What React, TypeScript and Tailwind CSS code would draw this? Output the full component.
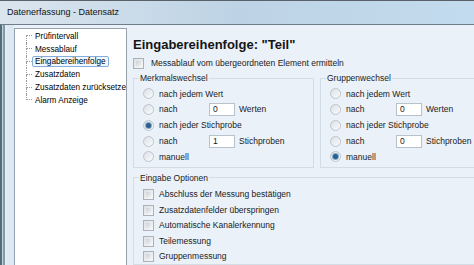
const FONT = "font-['Liberation_Sans',Arial,sans-serif]";

function Radio({ checked }: { checked?: boolean }) {
  return (
    <span className="w-[11px] h-[11px] rounded-full border border-[#bcc5cd] bg-gradient-to-br from-[#dce1e6] to-[#fbfcfd] flex items-center justify-center shrink-0">
      {checked && <span className="w-[5px] h-[5px] rounded-full bg-[#285f8e] ring-1 ring-[#86abc9]" />}
    </span>
  );
}

function Check() {
  return (
    <span className="w-[11px] h-[11px] border border-[#aab2ba] bg-gradient-to-br from-[#dde0e4] to-[#f7f8f9] shrink-0 p-[2px]">
      <span className="block w-full h-full bg-gradient-to-br from-[#cdd2d7] to-[#eff1f3]" />
    </span>
  );
}

function Field({ value }: { value: string }) {
  return (
    <span className="w-[26px] h-[13px] bg-white border border-[#b8c2cb] pl-[3px] leading-[11px] shrink-0">
      {value}
    </span>
  );
}

type Opt = { label: string; value?: string; unit?: string; checked?: boolean };

function RadioGroup({ title, options, width }: { title: string; options: Opt[]; width: string }) {
  return (
    <fieldset className={`${width} shrink-0 border border-[#d3dde5] pl-[9px] pt-[2px] pb-[2px]`}>
      <legend className="-ml-[4px] px-[1px] leading-[12px] text-[#222]">{title}</legend>
      {options.map((o, i) => (
        <div key={i} className="h-[15.75px] flex items-center">
          <Radio checked={o.checked} />
          <span className="ml-[5px] w-[50px] whitespace-nowrap">{o.label}</span>
          {o.value !== undefined && (
            <>
              <Field value={o.value} />
              <span className="ml-[4px] whitespace-nowrap">{o.unit}</span>
            </>
          )}
        </div>
      ))}
    </fieldset>
  );
}

function TreeRow({ label, first, last, selected }: { label: string; first?: boolean; last?: boolean; selected?: boolean }) {
  return (
    <div className="flex h-[12.8px]">
      <div className="w-[6px] flex flex-col shrink-0">
        <div className={`h-1/2 border-b border-dotted border-[#9a9a9a] ${first ? '' : 'border-l'}`} />
        <div className={`h-1/2 ${last ? '' : 'border-l border-dotted border-[#9a9a9a]'}`} />
      </div>
      <div
        className={`self-center h-[11px] leading-[10px] px-[2px] border rounded-[2px] whitespace-nowrap ${
          selected ? 'border-[#86acd9] bg-[#f1f7fe]' : 'border-transparent'
        }`}
      >
        {label}
      </div>
    </div>
  );
}

const merkmal: Opt[] = [
  { label: 'nach jedem Wert' },
  { label: 'nach', value: '0', unit: 'Werten' },
  { label: 'nach jeder Stichprobe', checked: true },
  { label: 'nach', value: '1', unit: 'Stichproben' },
  { label: 'manuell' },
];

const gruppe: Opt[] = [
  { label: 'nach jedem Wert' },
  { label: 'nach', value: '0', unit: 'Werten' },
  { label: 'nach jeder Stichprobe' },
  { label: 'nach', value: '0', unit: 'Stichproben' },
  { label: 'manuell', checked: true },
];

const optionen = [
  'Abschluss der Messung bestätigen',
  'Zusatzdatenfelder überspringen',
  'Automatische Kanalerkennung',
  'Teilemessung',
  'Gruppenmessung',
];

export default function App() {
  return (
    <div className={`w-[474px] h-[265px] overflow-hidden bg-[#eaf1f9] text-[8.5px] text-[#1b1b1b] flex flex-col ${FONT}`}>
      <div className="h-[25px] shrink-0 border-t border-[#5b6168] border-b border-b-[#6e7d8a] bg-gradient-to-r from-[#dbe5ee] via-[#bdd3e5] to-[#c3dbee] flex items-center pl-[7px] text-[9px] text-[#111]">
        Datenerfassung - Datensatz
      </div>
      <div className="flex flex-1 min-h-0">
        <div className="flex shrink-0">
          <div className="w-[2px] bg-[#506e7a]" />
          <div className="w-[1px] bg-[#c6d5dd]" />
          <div className="w-[2px] bg-[#8499a4]" />
          <div className="w-[2px] bg-[#e6eef5]" />
          <div className="w-[7px] bg-[#dce8f4]" />
        </div>
        <div className="w-[113px] shrink-0 mt-[3px] bg-white border border-[#96a2ad] border-b-0 pl-[11px] pt-[1px] overflow-hidden text-black text-[8.2px]">
          <TreeRow label="Prüfintervall" first />
          <TreeRow label="Messablauf" />
          <TreeRow label="Eingabereihenfolge" selected />
          <TreeRow label="Zusatzdaten" />
          <TreeRow label="Zusatzdaten zurücksetzen" />
          <TreeRow label="Alarm Anzeige" last />
        </div>
        <div className="flex-1 min-w-0 overflow-hidden pl-[6px]">
          <div className="mt-[12px] h-[16px] leading-[16px] text-[13px] font-bold text-[#151515] whitespace-nowrap">
            Eingabereihenfolge: "Teil"
          </div>
          <div className="mt-[3px] h-[14px] flex items-center whitespace-nowrap">
            <Check />
            <span className="ml-[7px]">Messablauf vom übergeordneten Element ermitteln</span>
          </div>
          <div className="mt-[2px] flex gap-[6px] w-[400px]">
            <RadioGroup title="Merkmalswechsel" options={merkmal} width="w-[181px]" />
            <RadioGroup title="Gruppenwechsel" options={gruppe} width="w-[190px]" />
          </div>
          <fieldset className="mt-[4px] w-[400px] border border-[#d3dde5] pl-[9px] pt-[3px]">
            <legend className="-ml-[4px] px-[1px] leading-[12px] text-[#222]">Eingabe Optionen</legend>
            {optionen.map((t) => (
              <div key={t} className="h-[15.5px] flex items-center whitespace-nowrap">
                <Check />
                <span className="ml-[5px]">{t}</span>
              </div>
            ))}
          </fieldset>
        </div>
      </div>
    </div>
  );
}
